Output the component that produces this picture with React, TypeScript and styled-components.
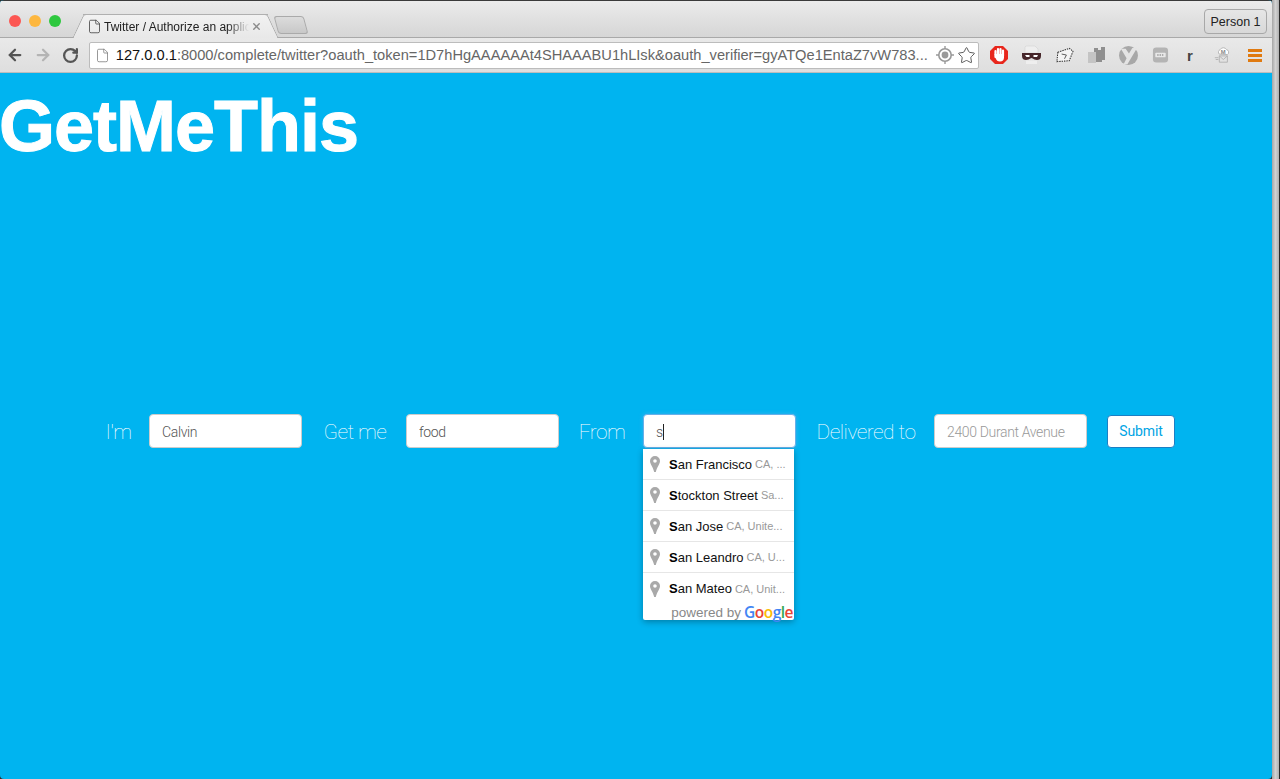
import React from 'react';
import styled, { createGlobalStyle } from 'styled-components';
import { ArrowLeft, ArrowRight, RotateCw, File, Star, X } from 'lucide-react';

const places = [
    { head: 'S', rest: 'an Francisco', detail: 'CA, ...' },
    { head: 'S', rest: 'tockton Street', detail: 'Sa...' },
    { head: 'S', rest: 'an Jose', detail: 'CA, Unite...' },
    { head: 'S', rest: 'an Leandro', detail: 'CA, U...' },
    { head: 'S', rest: 'an Mateo', detail: 'CA, Unit...' },
];

const googleLetters = [
    { letter: 'G', color: '#4285f4' },
    { letter: 'o', color: '#ea4335' },
    { letter: 'o', color: '#fbbc05' },
    { letter: 'g', color: '#4285f4' },
    { letter: 'l', color: '#34a853' },
    { letter: 'e', color: '#ea4335' },
];

const PinIcon = () => (
    <svg width="10" height="16" viewBox="0 0 10 16">
        <path
            fillRule="evenodd"
            fill="#a9a9a9"
            d="M5 0a5 5 0 0 1 5 5c0 3-3 6-4.2 11h-1.6C3 11 0 8 0 5a5 5 0 0 1 5-5zm0 3.2a1.8 1.8 0 1 0 0 3.6 1.8 1.8 0 0 0 0-3.6z"
        />
    </svg>
);

const App: React.FC = () => {
    return (
        <>
            <GlobalStyle />
            <Desktop>
                <BrowserWindow>
                    <TabStrip>
                        <Lights>
                            <Light $color="#fc5753" />
                            <Light $color="#fdb73f" />
                            <Light $color="#2ec83f" />
                        </Lights>
                        <Tab>
                            <File size={15} strokeWidth={1.3} color="#444" />
                            <TabTitle>Twitter / Authorize an applic</TabTitle>
                            <X size={11} strokeWidth={3} color="#8a8a8a" />
                        </Tab>
                        <NewTab />
                        <PersonButton>Person 1</PersonButton>
                    </TabStrip>
                    <Toolbar>
                        <NavIcon $color="#555"><ArrowLeft size={18} strokeWidth={3} /></NavIcon>
                        <NavIcon $color="#b4b4b4"><ArrowRight size={18} strokeWidth={3} /></NavIcon>
                        <NavIcon $color="#555"><RotateCw size={17} strokeWidth={3.2} /></NavIcon>
                        <Omnibox>
                            <File size={15} strokeWidth={1.2} color="#777" />
                            <Url>
                                <b>127.0.0.1</b>:8000/complete/twitter?oauth_token=1D7hHgAAAAAAt4SHAAABU1hLIsk&amp;oauth_verifier=gyATQe1EntaZ7vW783...
                            </Url>
                            <svg width="18" height="18" viewBox="0 0 18 18">
                                <circle cx="9" cy="9" r="6.2" fill="none" stroke="#999" strokeWidth="1.6" />
                                <circle cx="9" cy="9" r="3.4" fill="#999" />
                                <path d="M9 0v3M9 15v3M0 9h3M15 9h3" stroke="#999" strokeWidth="1.4" />
                            </svg>
                            <Star size={19} strokeWidth={1.2} color="#555" />
                        </Omnibox>
                        <Extensions>
                            <svg width="18" height="20" viewBox="0 0 18 20">
                                <path d="M5 1h8l5 5v8l-5 5H5l-5-5V6z" fill="#e8261c" />
                                <path d="M5.500 6v6M8 4v6M10.500 4v6M13 5.500V11" stroke="#fff" strokeWidth="2.200" strokeLinecap="round" />
                                <path d="M4.500 9h9.500v3.500c0 2.500-1.500 4-4 4-2.500 0-3.500-1-4.500-3.500z" fill="#fff" />
                            </svg>
                            <svg width="19" height="20" viewBox="0 0 19 20">
                                <path d="M4 1h9l3 3v4H3V2z" fill="#eee" stroke="#ccc" strokeWidth="0.500" />
                                <path d="M0 8h19v3c0 3-2 4-4 4s-3-1-5.500-2C7 14 6 15 4 15s-4-1-4-4z" fill="#46262a" />
                                <path d="M3 10h4.500v2H4.500zM11.500 10H16l-1 2h-3.500z" fill="#fff" />
                                <path d="M4 15.500h11V19H4z" fill="#eee" />
                            </svg>
                            <svg width="19" height="18" viewBox="0 0 20 18">
                                <path d="M3 6l12-4 4 3-4 10-13 1z" fill="#f4f4f4" stroke="#333" strokeWidth="1.100" strokeDasharray="1.500 1" />
                                <path d="M7 8l5 1-2 4" fill="none" stroke="#555" />
                            </svg>
                            <svg width="17" height="18" viewBox="0 0 17 18">
                                <path d="M6 2h4v2h3V1h4v13h-3v2H6z" fill="#8f8f8f" />
                                <path d="M0 6h8v11H0z" fill="#c4c4c4" />
                            </svg>
                            <svg width="19" height="19" viewBox="0 0 20 20">
                                <circle cx="10" cy="10" r="10" fill="#a8a8a8" />
                                <path d="M2 3h5l3.500 5L14 2h5L9 19H5l3-6z" fill="#e4e4e4" />
                            </svg>
                            <svg width="17" height="18" viewBox="0 0 18 18">
                                <rect x="1" y="1" width="16" height="16" rx="3.500" fill="#b4b4b4" />
                                <rect x="3.500" y="6.500" width="11" height="5" rx="1" fill="#e8e8e8" />
                                <path d="M5.500 9h7" stroke="#999" strokeWidth="1.500" strokeDasharray="1.500 1" />
                            </svg>
                            <Readability>r</Readability>
                            <svg width="18" height="20" viewBox="0 0 20 20">
                                <path d="M7 9a3 3 0 0 1 1-5 4 4 0 0 1 7 0 3 3 0 0 1 1 5.500z" fill="#fff" stroke="#b0b0b0" />
                                <text x="8.500" y="8.500" fontSize="6.500" fontWeight="bold" fill="#888" fontFamily="Liberation Sans">M</text>
                                <path d="M7 11h9v7H7zM7 11l4.500 4 4.500-4M2 13h4M3 15h3" fill="none" stroke="#b0b0b0" />
                            </svg>
                            <Hamburger>
                                <span />
                                <span />
                                <span />
                            </Hamburger>
                        </Extensions>
                    </Toolbar>
                    <Content>
                        <Title>GetMeThis</Title>
                        <OrderForm>
                            <FieldLabel $width={23}>I&apos;m</FieldLabel>
                            <TextField defaultValue="Calvin" />
                            <FieldLabel $width={64}>Get me</FieldLabel>
                            <TextField defaultValue="food" />
                            <FieldLabel $width={44}>From</FieldLabel>
                            <FieldWrap>
                                <FocusedField>
                                    s<Caret />
                                </FocusedField>
                                <Suggestions>
                                    {places.map((place) => (
                                        <Suggestion key={place.rest}>
                                            <PinIcon />
                                            <Primary>
                                                <b>{place.head}</b>
                                                {place.rest}
                                            </Primary>
                                            <Secondary>{place.detail}</Secondary>
                                        </Suggestion>
                                    ))}
                                    <PoweredBy>
                                        powered by
                                        <GoogleMark>
                                            {googleLetters.map((item, index) => (
                                                <GoogleLetter key={index} $color={item.color}>{item.letter}</GoogleLetter>
                                            ))}
                                        </GoogleMark>
                                    </PoweredBy>
                                </Suggestions>
                            </FieldWrap>
                            <FieldLabel $width={98}>Delivered to</FieldLabel>
                            <TextField placeholder="2400 Durant Avenue" />
                            <SubmitButton type="button">Submit</SubmitButton>
                        </OrderForm>
                    </Content>
                </BrowserWindow>
                <WindowEdge />
            </Desktop>
        </>
    );
};

export default App;

const GlobalStyle = createGlobalStyle`
    html, body {
        margin: 0;
        height: 100%;
        overflow: hidden;
    }
    body {
        font-family: "Liberation Sans", Arial, sans-serif;
    }
`;

const Desktop = styled.div`
    width: 1280px;
    height: 779px;
    display: flex;
    background: #2b2b2b;
`;

const BrowserWindow = styled.div`
    width: 1272px;
    display: flex;
    flex-direction: column;
    overflow: hidden;
    background: #00b4f0;
    border-radius: 4px;
`;

const WindowEdge = styled.div`
    flex: 1;
    margin-right: 1px;
    background: linear-gradient(90deg, #a6a6a6, #d2d2d2 50%, #b0b0b0);
`;

const TabStrip = styled.div`
    height: 38px;
    box-sizing: border-box;
    flex-shrink: 0;
    display: flex;
    align-items: flex-end;
    padding-left: 9px;
    padding-right: 5px;
    border-top: 1px solid #3a3a3a;
    border-bottom: 1px solid #a9a9a9;
    background: linear-gradient(#ebebeb, #d6d6d6);
`;

const Lights = styled.div`
    display: flex;
    gap: 8px;
    align-self: flex-start;
    margin-top: 14px;
`;

const Light = styled.span<{ $color: string }>`
    width: 12px;
    height: 12px;
    border-radius: 50%;
    background: ${(props) => props.$color};
`;

const Tab = styled.div`
    position: relative;
    width: 185px;
    height: 24px;
    box-sizing: border-box;
    margin-left: 22px;
    margin-bottom: -1px;
    padding: 0 6px 0 4px;
    display: flex;
    align-items: center;
    gap: 2px;
    background: linear-gradient(#f2f2f2, #e8e8e8);
    border-top: 1px solid #b0b0b0;

    &::before,
    &::after {
        content: '';
        position: absolute;
        top: -1px;
        bottom: 0;
        width: 12px;
        background: linear-gradient(#f2f2f2, #e8e8e8);
        border-top: 1px solid #b0b0b0;
    }

    &::before {
        left: -5.5px;
        border-left: 1px solid #a8a8a8;
        border-radius: 3px 0 0 0;
        transform: skewX(-25deg);
    }

    &::after {
        right: -4.5px;
        border-right: 1px solid #a8a8a8;
        border-radius: 0 3px 0 0;
        transform: skewX(25deg);
    }

    > * {
        position: relative;
        z-index: 1;
    }
`;

const TabTitle = styled.span`
    flex: 1;
    font-size: 12px;
    color: #222;
    white-space: nowrap;
    overflow: hidden;
    mask-image: linear-gradient(90deg, #000 85%, transparent);
`;

const NewTab = styled.div`
    width: 28px;
    height: 16px;
    margin-left: 8px;
    margin-bottom: 3px;
    background: linear-gradient(#dcdcdc, #c8c8c8);
    border: 1px solid #aaa;
    border-radius: 3px;
    transform: skewX(15deg);
`;

const PersonButton = styled.div`
    margin-left: auto;
    align-self: flex-start;
    margin-top: 8px;
    width: 63px;
    height: 25px;
    box-sizing: border-box;
    display: flex;
    align-items: center;
    justify-content: center;
    font-size: 12.500px;
    color: #222;
    border: 1px solid #a8a8a8;
    border-radius: 4px;
`;

const Toolbar = styled.div`
    height: 35px;
    box-sizing: border-box;
    flex-shrink: 0;
    display: flex;
    align-items: center;
    padding: 0 10px 0 1px;
    background: linear-gradient(#e9e9e9, #dedede);
    border-bottom: 1px solid #bdbdbd;
`;

const NavIcon = styled.div<{ $color: string }>`
    width: 28px;
    display: flex;
    justify-content: center;
    color: ${(props) => props.$color};
`;

const Omnibox = styled.div`
    width: 892px;
    height: 27px;
    box-sizing: border-box;
    margin-left: 4px;
    padding: 0 2px 0 5px;
    display: flex;
    align-items: center;
    gap: 3px;
    background: #fff;
    border: 1px solid #bcbcbc;
    border-radius: 2px;
`;

const Url = styled.span`
    flex: 1;
    margin-left: 3px;
    font-size: 14.650px;
    color: #666;
    white-space: nowrap;
    overflow: hidden;

    b {
        font-weight: normal;
        color: #111;
    }
`;

const Extensions = styled.div`
    flex: 1;
    display: flex;
    align-items: center;
    gap: 14px;
    margin-left: 11px;
`;

const Readability = styled.span`
    width: 7px;
    margin: 0 5px 0 4px;
    font-size: 15px;
    font-weight: bold;
    color: #444;
`;

const Hamburger = styled.div`
    width: 14px;
    margin-left: 3px;
    display: flex;
    flex-direction: column;
    gap: 2px;

    span {
        height: 3px;
        background: #e07a10;
    }
`;

const Content = styled.main`
    flex: 1;
    min-height: 0;
    display: flex;
    flex-direction: column;
`;

const Title = styled.h1`
    margin: 13px 0 0 -1px;
    font-family: "Liberation Sans", Arial, sans-serif;
    font-size: 72px;
    line-height: 80px;
    letter-spacing: -1px;
    font-weight: bold;
    color: #fff;
    -webkit-text-stroke: 1px #fff;
`;

const OrderForm = styled.form`
    margin-top: 248px;
    padding-left: 86px;
    display: flex;
    align-items: center;
`;

const FieldLabel = styled.label<{ $width: number }>`
    width: ${(props) => props.$width}px;
    margin: 0 19px 0 21px;
    padding-top: 2px;
    font-family: Roboto, sans-serif;
    font-size: 21px;
    font-weight: 100;
    letter-spacing: -0.550px;
    white-space: nowrap;
    display: flex;
    justify-content: center;
    color: #fff;
`;

const TextField = styled.input`
    width: 153px;
    height: 34px;
    box-sizing: border-box;
    padding: 2px 12px 0;
    font-family: Roboto, sans-serif;
    font-size: 14px;
    font-weight: 300;
    letter-spacing: -0.350px;
    color: #555;
    background: #fff;
    border: 1px solid #ccc;
    border-radius: 4px;
    outline: none;

    &::placeholder {
        color: #999;
    }
`;

const FieldWrap = styled.div`
    position: relative;
`;

const FocusedField = styled.div`
    width: 153px;
    height: 34px;
    box-sizing: border-box;
    padding: 2px 12px 0;
    display: flex;
    align-items: center;
    font-family: Roboto, sans-serif;
    font-size: 14px;
    font-weight: 300;
    color: #555;
    background: #fff;
    border: 1px solid #66afe9;
    border-radius: 4px;
    box-shadow: 0 0 4px rgba(102, 175, 233, 0.6);
`;

const Caret = styled.span`
    width: 1px;
    height: 16px;
    background: #222;
`;

const Suggestions = styled.div`
    position: absolute;
    top: 35px;
    left: 0;
    width: 151px;
    background: #fff;
    border-radius: 0 0 2px 2px;
    box-shadow: 0 2px 6px rgba(0, 0, 0, 0.3);
`;

const Suggestion = styled.div`
    height: 31px;
    box-sizing: border-box;
    padding: 0 4px 0 7px;
    display: flex;
    align-items: center;
    white-space: nowrap;
    overflow: hidden;
    font-family: Arial, "Liberation Sans", sans-serif;
    border-bottom: 1px solid #e6e6e6;

    &:nth-child(5) {
        border-bottom: none;
    }

    svg {
        flex-shrink: 0;
        margin-right: 9px;
    }
`;

const Primary = styled.span`
    font-size: 13px;
    color: #111;
    margin-right: 3px;

    b {
        color: #000;
    }
`;

const Secondary = styled.span`
    font-size: 11px;
    color: #999;
`;

const PoweredBy = styled.div`
    height: 16px;
    display: flex;
    align-items: center;
    justify-content: flex-end;
    gap: 3px;
    font-size: 13.500px;
    color: #888;
    padding-right: 1px;
`;

const GoogleMark = styled.span`
    font-family: "Open Sans", sans-serif;
    font-size: 15.500px;
    font-weight: 600;
    letter-spacing: -0.500px;
`;

const GoogleLetter = styled.span<{ $color: string }>`
    color: ${(props) => props.$color};
`;

const SubmitButton = styled.button`
    width: 68px;
    height: 33px;
    margin-left: 20px;
    padding: 0;
    font-family: Roboto, sans-serif;
    font-size: 14px;
    letter-spacing: -0.100px;
    color: #00a4e4;
    background: #fff;
    border: 1px solid #1b7fc4;
    border-radius: 4px;
`;
